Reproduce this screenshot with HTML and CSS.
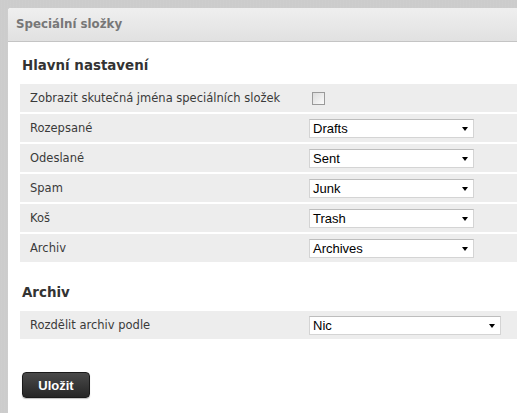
FILE: index.html
```html
<!DOCTYPE html>
<html lang="cs">
<head>
<meta charset="utf-8">
<title>Speciální složky</title>
<link rel="stylesheet" href="styles.css">
</head>
<body>
<div class="panel">
  <div class="panel-header">Speciální složky</div>
  <div class="panel-body">
    <h3 class="section-title">Hlavní nastavení</h3>
    <div class="rows">
      <div class="row">
        <div class="label">Zobrazit skutečná jména speciálních složek</div>
        <div class="value"><span class="checkbox"></span></div>
      </div>
      <div class="row">
        <div class="label">Rozepsané</div>
        <div class="value"><div class="select"><span>Drafts</span></div></div>
      </div>
      <div class="row">
        <div class="label">Odeslané</div>
        <div class="value"><div class="select"><span>Sent</span></div></div>
      </div>
      <div class="row">
        <div class="label">Spam</div>
        <div class="value"><div class="select"><span>Junk</span></div></div>
      </div>
      <div class="row">
        <div class="label">Koš</div>
        <div class="value"><div class="select"><span>Trash</span></div></div>
      </div>
      <div class="row">
        <div class="label">Archiv</div>
        <div class="value"><div class="select"><span>Archives</span></div></div>
      </div>
    </div>
    <h3 class="section-title second">Archiv</h3>
    <div class="rows">
      <div class="row">
        <div class="label">Rozdělit archiv podle</div>
        <div class="value"><div class="select wide"><span>Nic</span></div></div>
      </div>
    </div>
    <div class="actions">
      <button class="btn">Uložit</button>
    </div>
  </div>
</div>
</body>
</html>
```
FILE: styles.css
```css
html, body {
  margin: 0;
  padding: 0;
  height: 100%;
}
body {
  background-color: #cccccc;
  background-image: repeating-linear-gradient(90deg, #c6c6c6 0px, #d2d2d2 1px, #c9c9c9 2px, #cfcfcf 3px);
  padding: 8px 0 0 8px;
  box-sizing: border-box;
  overflow: hidden;
}
.panel {
  background: #fff;
  height: 100%;
  border-top-left-radius: 3px;
}
.panel-header {
  height: 33px;
  border-bottom: 1px solid #c4c4c4;
  background: linear-gradient(#efefef, #e1e1e1);
  border-top-left-radius: 3px;
  font-family: "DejaVu Sans", Verdana, sans-serif;
  font-weight: bold;
  font-size: 11.8px;
  color: #777;
  line-height: 33px;
  padding-left: 8px;
}
.panel-body {
  padding: 14px 0 0 12px;
}
.section-title {
  margin: 0 0 8px 0;
  font-family: "DejaVu Sans", Verdana, sans-serif;
  font-weight: bold;
  font-size: 13.4px;
  line-height: 20px;
  color: #333;
  padding-left: 2px;
}
.section-title.second {
  margin-top: 21px;
}
.rows {
  display: flex;
  flex-direction: column;
  gap: 2px;
}
.row {
  display: grid;
  grid-template-columns: 289px 1fr;
  align-items: center;
  height: 28px;
  background: #ededed;
}
.label {
  padding-left: 10px;
  font-family: "DejaVu Sans", Verdana, sans-serif;
  font-size: 11.5px;
  color: #3a3a3a;
}
.value {
  display: flex;
  align-items: center;
}
.checkbox {
  display: block;
  width: 11px;
  height: 11px;
  margin-left: 3px;
  border: 1px solid #9a9a9a;
  background: linear-gradient(135deg, #dcdcdc, #fbfbfb);
}
.select {
  position: relative;
  box-sizing: border-box;
  width: 165px;
  height: 19px;
  background: #fff;
  border: 1px solid #d4d4d4;
  border-top-color: #bdbdbd;
  font-family: "Liberation Sans", Arial, sans-serif;
  font-size: 13px;
  line-height: 17px;
  color: #000;
  padding-left: 3px;
}
.select.wide {
  width: 192px;
}
.select::after {
  content: "";
  position: absolute;
  right: 5px;
  top: 7px;
  border-left: 3.5px solid transparent;
  border-right: 3.5px solid transparent;
  border-top: 4px solid #000;
}
.actions {
  padding: 33px 0 0 2px;
}
.btn {
  display: block;
  width: 68px;
  height: 26px;
  border: 1px solid #1a1a1a;
  border-radius: 4px;
  background: linear-gradient(#4a4a4a, #262626);
  color: #fff;
  font-family: "Liberation Sans", Arial, sans-serif;
  font-weight: bold;
  font-size: 13px;
  padding: 0;
  box-shadow: 0 1px 1px rgba(0,0,0,0.25);
}
```
